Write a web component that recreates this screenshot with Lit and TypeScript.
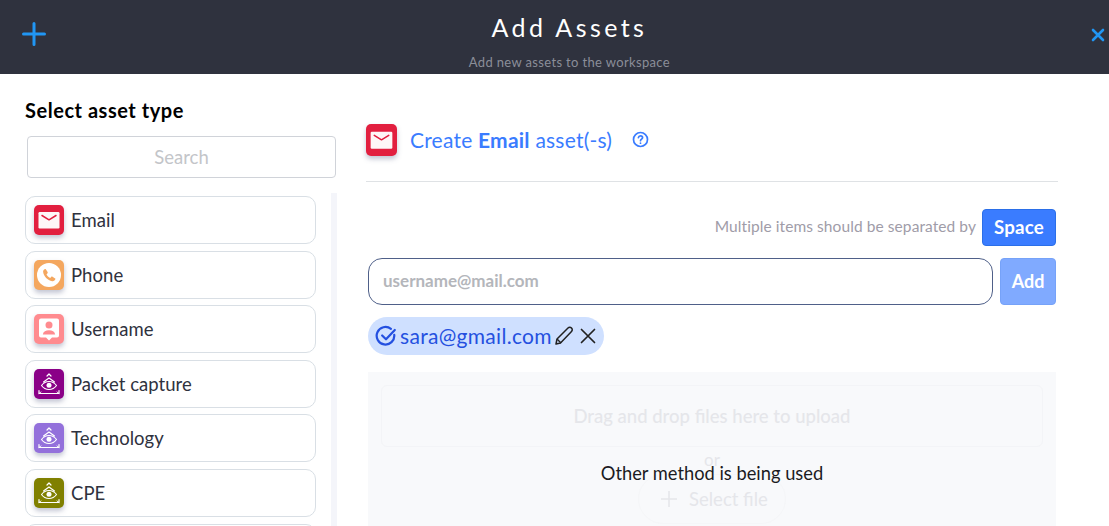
import { LitElement, html, css, svg } from "lit";
import { customElement } from "lit/decorators.js";

const mail = svg`<rect x="4.5" y="7" width="21" height="16.500" rx="1.2" fill="#fff" fill-opacity=".96"/><path d="M8 10.500 15 14.800l7-4.300" fill="none" stroke="#e21f3f" stroke-width="1.500" stroke-linecap="round" stroke-linejoin="round"/>`;
const phone = svg`<circle cx="15" cy="15" r="12" fill="#fff"/><path d="M11.500 8.800 13.600 12c.3.500.2 1-.2 1.400l-.9.800c.8 1.600 2 2.900 3.700 3.700l.9-1c.4-.4.9-.5 1.400-.2l3 2c-.4 1.700-1.800 2.800-3.400 2.500-4.400-.8-8.500-5-9-9.500-.1-1.300.9-2.500 2.400-2.700Z" fill="#f4a75f"/>`;
const user = svg`<path d="M7 4.500h16a2 2 0 0 1 2 2v15a2 2 0 0 1-2 2h-5l-3 3-3-3H7a2 2 0 0 1-2-2v-15a2 2 0 0 1 2-2Z" fill="#fff"/><circle cx="15" cy="11" r="3.500" fill="#ff8b8f"/><path d="M8.800 20.500c.5-3 3-4.300 6.200-4.300s5.700 1.300 6.200 4.300Z" fill="#ff8b8f"/>`;
const eye = svg`<g fill="none" stroke="#fff" stroke-width="1.200" stroke-linecap="round" stroke-linejoin="round"><path d="M13 7 15 5l2 2"/><path d="M9.500 13 15 9l5.500 4"/><path d="M7.500 16.500C9.500 13.800 12 12.500 15 12.500s5.500 1.300 7.500 4C20.500 19.300 18 20.500 15 20.500s-5.500-1.200-7.500-4Z"/><path d="M5 21.500v3h20v-3"/><path d="M7 23 5 24.500M23 23l2 1.500" stroke-width=".9"/></g><circle cx="15" cy="16.300" r="2.500" fill="#fff"/>`;

const items: [string, string, unknown][] = [
  ["Email", "#e21f3f", mail],
  ["Phone", "#f4a75f", phone],
  ["Username", "#ff8b8f", user],
  ["Packet capture", "#8a0087", eye],
  ["Technology", "#9370db", eye],
  ["CPE", "#808000", eye],
];

@customElement("app-root")
export class AppRoot extends LitElement {
  static styles = css`
    :host { display: block; width: 1109px; height: 526px; overflow: hidden; background: #fff; font-family: "Lato", "Inter", sans-serif; color: #2f323e; }
    * { box-sizing: border-box; }
    header { height: 74px; background: #2f323e; display: grid; grid-template-columns: 1fr auto 439px; }
    .plus { margin: 22px 0 0 22px; width: 24px; height: 24px; display: block; }
    .titles { display: flex; flex-direction: column; align-items: center; }
    h1 { margin: 11px 0 0; font-size: 25px; line-height: 32px; font-weight: 400; color: #fff; letter-spacing: 3.400px; }
    .sub { margin-top: 11px; font-size: 13px; line-height: 16px; color: #8b8e99; letter-spacing: .35px; }
    .close { justify-self: end; margin: 28px 4px 0 0; width: 14px; height: 14px; }
    main { display: grid; grid-template-columns: 337px 1fr; height: 452px; overflow: hidden; }
    .side { padding: 24px 0 0 25px; display: flex; flex-direction: column; }
    h2 { margin: 0; font-size: 20px; line-height: 24px; font-weight: 700; color: #000; letter-spacing: .53px; }
    .search { margin: 14px 0 0 2px; width: 309px; height: 42px; border: 1px solid #d0d3d9; border-radius: 4px; display: flex; align-items: center; justify-content: center; padding-bottom: 1px; font-size: 18.500px; color: #c3c5c9; }
    .listwrap { margin-top: 15px; display: flex; justify-content: space-between; min-height: 0; flex: 1; }
    .list { width: 291px; padding-top: 3px; display: flex; flex-direction: column; gap: 6.600px; }
    .track { width: 6px; background: #f4f5fa; }
    .item { height: 48px; flex: none; border: 1px solid #d9dfe5; border-radius: 10px; display: flex; align-items: center; gap: 7px; padding-left: 8px; font-size: 18.500px; letter-spacing: .05px; }
    .ico { width: 30px; height: 30px; border-radius: 5px; flex: none; box-shadow: 0 3px 5px rgba(80, 90, 130, .35); display: block; }
    .content { padding: 50px 51px 0 29px; display: flex; flex-direction: column; align-items: stretch; }
    .head { display: flex; align-items: center; height: 33px; padding-bottom: 1px; }
    .head .ico { width: 31px; height: 32px; }
    .head span { margin: 0 0 2px 13px; font-size: 21px; letter-spacing: .22px; color: #3a7cff; }
    .head b { font-weight: 700; }
    .help { margin: 0 0 2px 20px; width: 17px; height: 17px; }
    hr { border: 0; border-top: 1px solid #dfe2e5; margin: 24px 0 0; }
    .sep { margin: 27px 2px 0 0; display: flex; justify-content: flex-end; align-items: center; gap: 6px; font-size: 15.500px; letter-spacing: .08px; color: #a09ca8; }
    .sep span { margin-bottom: 3px; }
    .key { width: 74px; height: 37px; padding-bottom: 2px; background: #3a7cff; border: 1px solid #2b6fe8; border-radius: 4px; color: #fff; font-weight: 700; font-size: 18.700px; letter-spacing: .2px; display: flex; align-items: center; justify-content: center; }
    .row { margin-top: 12px; display: flex; gap: 7px; padding-right: 2px; padding-left: 2px; }
    .input { flex: 1; height: 47px; border: 1px solid #4f6089; border-radius: 14px; display: flex; align-items: center; padding: 0 0 2px 14px; font-size: 17px; font-weight: 700; color: #b4b6bb; }
    .add { width: 56px; height: 47px; padding-bottom: 2px; background: #80aaff; border: 1px solid #76a2f8; border-radius: 4px; color: #fff; font-weight: 700; font-size: 18px; display: flex; align-items: center; justify-content: center; }
    .chip { margin: 12px 0 0 2px; align-self: flex-start; height: 38px; width: 236px; border-radius: 19px; background: #cfe0ff; display: flex; align-items: center; padding-left: 7px; color: #2450e0; font-size: 21px; letter-spacing: .3px; }
    .chip svg { flex: none; width: 20px; height: 20px; }
    .chip svg.check { width: 22px; height: 22px; }
    .chip span { margin: 0 0 2px 3px; width: 154px; white-space: nowrap; }
    .chip .x { margin-left: 4px; }
    .drop { margin: 17px 2px 0; flex: 1; background: #f8f9fb; position: relative; padding: 13px 13px 0; display: flex; flex-direction: column; align-items: center; color: #e5e6ea; }
    .zone { width: 100%; height: 62px; border: 1px solid #f3f4f7; border-radius: 6px; display: flex; align-items: center; justify-content: center; font-size: 18.500px; font-weight: 500; }
    .or { margin-top: 3px; font-size: 17px; line-height: 20px; }
    .sel { margin-top: 4px; width: 148px; height: 50px; flex: none; display: flex; align-items: center; gap: 11px; font-size: 18.500px; padding: 0 0 0 21px; border: 1px solid #f5f6f8; border-radius: 25px; }
    .sel svg { width: 18px; height: 18px; flex: none; }
    .over { position: absolute; left: 0; right: 0; top: 89px; text-align: center; color: #1b1b1f; font-size: 18.300px; line-height: 24px; }
  `;

  render() {
    return html`
      <header>
        <svg class="plus" viewBox="0 0 24 24"><path d="M12 1.500v21M1.500 12h21" stroke="#2196f3" stroke-width="3" stroke-linecap="round" fill="none"/></svg>
        <div class="titles"><h1>Add Assets</h1><div class="sub">Add new assets to the workspace</div></div>
        <svg class="close" viewBox="0 0 14 14"><path d="M2 2l10 10M12 2 2 12" stroke="#2196f3" stroke-width="2.600" stroke-linecap="round" fill="none"/></svg>
      </header>
      <main>
        <section class="side">
          <h2>Select asset type</h2>
          <div class="search">Search</div>
          <div class="listwrap">
            <div class="list">
              ${items.map(([n, c, i]) => html`<div class="item"><svg class="ico" viewBox="0 0 30 30" style="background:${c}">${i}</svg>${n}</div>`)}
              <div class="item"></div>
            </div>
            <div class="track"></div>
          </div>
        </section>
        <section class="content">
          <div class="head">
            <svg class="ico" viewBox="0 0 30 30" style="background:#e21f3f">${mail}</svg>
            <span>Create <b>Email</b> asset(-s)</span>
            <svg class="help" viewBox="0 0 17 17" fill="none" stroke="#3a7cff" stroke-width="1.700" stroke-linecap="round"><circle cx="8.500" cy="8.500" r="7"/><path d="M6.400 6.600c.2-1.200 1-1.800 2.100-1.800 1.200 0 2.100.7 2.100 1.800 0 1.500-2.100 1.500-2.100 3.100"/><path d="M8.500 12.100v.1"/></svg>
          </div>
          <hr />
          <div class="sep"><span>Multiple items should be separated by</span><div class="key">Space</div></div>
          <div class="row"><div class="input">username@mail.com</div><div class="add">Add</div></div>
          <div class="chip">
            <svg class="check" viewBox="0 0 20 20" fill="none" stroke="#2450e0" stroke-width="2" stroke-linecap="round" stroke-linejoin="round"><path d="M17.500 9A8 8 0 1 1 14.500 3.500"/><path d="M6.500 9.500 10 13l8-8.500"/></svg>
            <span>sara@gmail.com</span>
            <svg viewBox="0 0 20 20" fill="none" stroke="#222" stroke-width="1.500" stroke-linejoin="round"><path d="M2 18l1-5L14 2c1-1 2.500-1 3.500 0s1 2.500 0 3.500L6.500 17Z"/><path d="M3 13l4 4"/></svg>
            <svg class="x" viewBox="0 0 20 20" fill="none" stroke="#222" stroke-width="1.700" stroke-linecap="round"><path d="M3.500 3.500l13 13M16.500 3.500l-13 13"/></svg>
          </div>
          <div class="drop">
            <div class="zone">Drag and drop files here to upload</div>
            <div class="or">or</div>
            <div class="sel"><svg viewBox="0 0 18 18"><path d="M9 1v16M1 9h16" stroke="#e5e6ea" stroke-width="1.600" fill="none"/></svg>Select file</div>
            <div class="over">Other method is being used</div>
          </div>
        </section>
      </main>
    `;
  }
}
